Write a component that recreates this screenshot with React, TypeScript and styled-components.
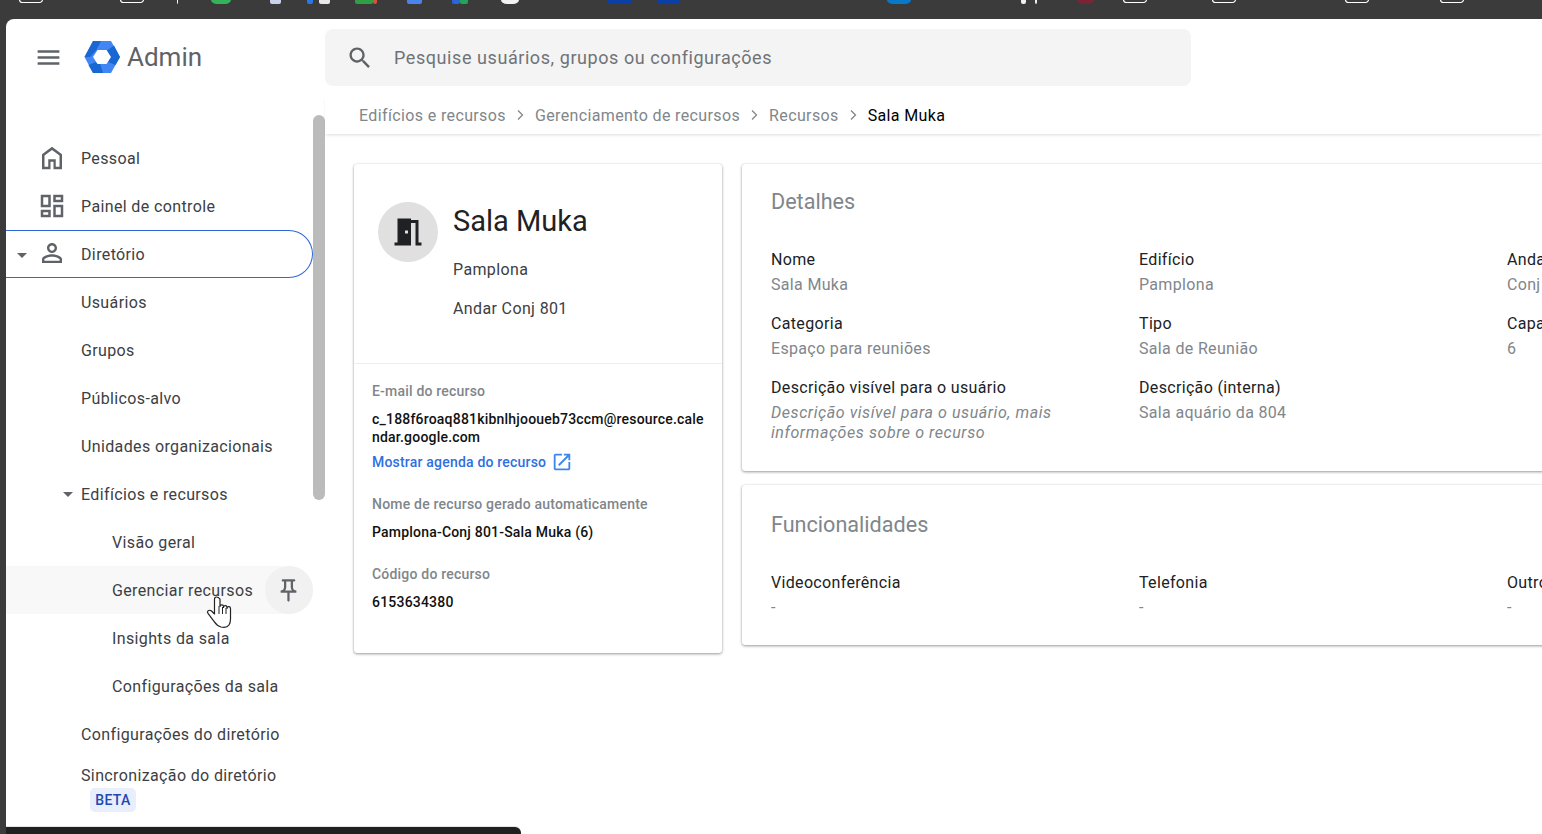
import React from 'react';
import styled, { createGlobalStyle } from 'styled-components';

const GlobalStyle = createGlobalStyle`
  html, body {
    margin: 0;
    padding: 0;
    height: 100%;
    overflow: hidden;
    background: #3b3b3b;
    font-family: Roboto, "Liberation Sans", sans-serif;
  }
  * { box-sizing: border-box; }
`;

const Desktop = styled.div`
  position: relative;
  width: 1542px;
  height: 834px;
  padding: 19px 0 0 6px;
  overflow: hidden;
`;

const TaskStrip = styled.svg`
  position: absolute;
  left: 0;
  top: 0;
`;

const BottomBar = styled.div`
  position: absolute;
  left: 6px;
  bottom: 0;
  width: 515px;
  height: 7px;
  background: #202020;
  border-top-right-radius: 6px;
  box-shadow: 0 -1px 0 #e4e4e4;
`;

const Window = styled.div`
  width: 1536px;
  height: 815px;
  background: #fff;
  border-top-left-radius: 8px;
  overflow: hidden;
  display: flex;
  flex-direction: column;
`;

const Header = styled.header`
  height: 77px;
  flex: none;
  display: flex;
  align-items: center;
  padding: 0 0 0 28px;
`;

const BrandBlock = styled.div`
  width: 291px;
  display: flex;
  align-items: center;
  margin-top: -1px;
`;

const MenuIcon = styled.svg`
  width: 29px;
  height: 29px;
  fill: #5f6368;
  flex: none;
`;

const Logo = styled.svg`
  width: 44px;
  height: 40px;
  margin-left: 17px;
  flex: none;
`;

const ProductName = styled.span`
  font-size: 26px;
  color: #5f6368;
  margin-left: 3px;
`;

const SearchBox = styled.div`
  width: 866px;
  height: 57px;
  background: #f4f4f4;
  border-radius: 8px;
  display: flex;
  align-items: center;
  padding-left: 21px;
  gap: 20px;
  font-size: 18px;
  letter-spacing: 0.57px;
  color: #6f7377;
`;

const SearchIcon = styled.svg`
  width: 28px;
  height: 28px;
  fill: #5f6368;
  flex: none;
`;

const Body = styled.div`
  flex: 1;
  min-height: 0;
  display: flex;
`;

const Sidebar = styled.nav`
  width: 307px;
  flex: none;
  padding-top: 38px;
  letter-spacing: 0.37px;
`;

const NavRow = styled.div<{ $indent: number; $outlined?: boolean; $hovered?: boolean }>`
  position: relative;
  height: 48px;
  display: flex;
  align-items: center;
  padding-left: ${p => p.$indent}px;
  font-size: 16px;
  color: #3c4043;
  border-radius: 0 24px 24px 0;
  ${p => p.$outlined && 'border: 1px solid #2f66d8; border-left: none;'}
  ${p => p.$hovered && 'background: #f8f8f8;'}
`;

const NavIcon = styled.svg<{ $top: number }>`
  position: absolute;
  left: 31px;
  top: ${p => p.$top}px;
  width: 30px;
  height: 30px;
  fill: #5f6368;
  fill-rule: evenodd;
`;

const Caret = styled.span<{ $left: number }>`
  position: absolute;
  left: ${p => p.$left}px;
  top: 22px;
  width: 0;
  height: 0;
  border-left: 5px solid transparent;
  border-right: 5px solid transparent;
  border-top: 5px solid #5f6368;
`;

const PinButton = styled.span`
  position: absolute;
  right: 0;
  top: 0;
  width: 48px;
  height: 48px;
  padding-right: 2px;
  border-radius: 50%;
  background: #f1f1f1;
  display: flex;
  align-items: center;
  justify-content: center;
`;

const PinIcon = styled.svg`
  width: 27px;
  height: 27px;
  fill: #5f6368;
`;

const SyncRow = styled.div`
  padding: 7px 0 0 75px;
  font-size: 16px;
  line-height: 22px;
  color: #3c4043;
`;

const BetaTag = styled.span`
  display: block;
  width: 46px;
  height: 24px;
  margin: 1px 0 0 9px;
  border-radius: 5px;
  background: #e8eefb;
  color: #2447b3;
  font-size: 14px;
  font-weight: 500;
  line-height: 24px;
  text-align: center;
  letter-spacing: 0.3px;
`;

const ScrollTrack = styled.div`
  width: 12px;
  flex: none;
  padding-top: 19px;
`;

const ScrollThumb = styled.div`
  width: 12px;
  height: 385px;
  border-radius: 6px;
  background: #bbb;
`;

const Content = styled.main`
  flex: 1;
  min-width: 0;
  display: flex;
  flex-direction: column;
`;

const Breadcrumbs = styled.div`
  height: 38px;
  flex: none;
  display: flex;
  align-items: center;
  padding: 0 0 0 34px;
  font-size: 16px;
  letter-spacing: 0.37px;
  color: #80868b;
  box-shadow: 0 2px 3px -1px rgba(0, 0, 0, 0.14);
`;

const Crumb = styled.span<{ $current?: boolean }>`
  color: ${p => (p.$current ? '#000' : '#80868b')};
`;

const CrumbArrow = styled.svg`
  width: 18px;
  height: 18px;
  margin: 0 6px 0 5px;
  fill: none;
  stroke: #80868b;
  stroke-width: 1.3;
`;

const CardArea = styled.div`
  flex: 1;
  display: flex;
  align-items: flex-start;
  gap: 20px;
  padding: 30px 0 0 29px;
  overflow: hidden;
`;

const Card = styled.section`
  background: #fff;
  border-radius: 3px;
  box-shadow: 0 1px 3px rgba(0, 0, 0, 0.4), 0 0 1px rgba(0, 0, 0, 0.12);
`;

const ProfileCard = styled(Card)`
  width: 368px;
  height: 489px;
  flex: none;
`;

const ProfileTop = styled.div`
  height: 200px;
  border-bottom: 1px solid #eee;
  display: flex;
  padding: 38px 0 0 24px;
  gap: 15px;
`;

const Avatar = styled.div`
  width: 60px;
  height: 60px;
  flex: none;
  border-radius: 50%;
  background: #e0e0e0;
  display: flex;
  align-items: center;
  justify-content: center;
`;

const DoorIcon = styled.svg`
  width: 36px;
  height: 36px;
  fill: #202124;
`;

const ProfileNames = styled.div`
  padding-top: 0;
`;

const ProfileName = styled.h1`
  margin: 0 0 10px;
  font-size: 29px;
  font-weight: 400;
  line-height: 38px;
  color: #202124;
`;

const ProfileLine = styled.p`
  margin: 0;
  font-size: 16px;
  line-height: 39px;
  letter-spacing: 0.37px;
  color: #3c4043;
`;

const ProfileBottom = styled.div`
  padding: 18px 17px 0 18px;
  letter-spacing: 0.2px;
`;

const InfoBlock = styled.div`
  margin-bottom: 24px;
`;

const InfoLabel = styled.div`
  font-size: 14px;
  font-weight: 500;
  line-height: 18px;
  color: #80868b;
  margin-bottom: 10px;
`;

const InfoValue = styled.div`
  font-size: 14px;
  font-weight: 500;
  line-height: 18px;
  color: #111;
  word-break: break-all;
`;

const ResourceLink = styled.a`
  display: flex;
  align-items: center;
  gap: 5px;
  height: 24px;
  margin: 4px 0 -3px;
  font-size: 14px;
  font-weight: 500;
  color: #2f6fe0;
`;

const LinkIcon = styled.svg`
  width: 22px;
  height: 22px;
  fill: #3f86ea;
`;

const DetailColumn = styled.div`
  display: flex;
  flex-direction: column;
  gap: 14px;
  flex: none;
  width: 1162px;
`;

const DetailCard = styled(Card)<{ $height: number }>`
  height: ${p => p.$height}px;
  padding: 0 29px;
`;

const CardTitle = styled.h2<{ $top: number }>`
  margin: 0;
  padding-top: ${p => p.$top}px;
  font-size: 21.6px;
  font-weight: 400;
  line-height: 30px;
  color: #80868b;
`;

const FieldGrid = styled.div<{ $top: number }>`
  display: grid;
  grid-template-columns: repeat(3, 368px);
  row-gap: 19px;
  margin-top: ${p => p.$top}px;
  letter-spacing: 0.33px;
`;

const Field = styled.div``;

const FieldLabel = styled.div`
  font-size: 16px;
  line-height: 20px;
  color: #202124;
  margin-bottom: 5px;
`;

const FieldValue = styled.div<{ $italic?: boolean }>`
  font-size: 16px;
  line-height: 20px;
  color: #80868b;
  max-width: 310px;
  ${p => p.$italic && 'font-style: italic; letter-spacing: 0.57px;'}
`;

const HandCursor = styled.svg`
  position: absolute;
  left: 205px;
  top: 594px;
  width: 30px;
  height: 36px;
`;

const slivers: { x: number; w: number; c: string; outline?: boolean; round?: boolean }[] = [
  { x: 19, w: 23, c: '#fff', outline: true },
  { x: 120, w: 23, c: '#fff', outline: true },
  { x: 177, w: 1, c: '#fff' },
  { x: 211, w: 20, c: '#34b35a', round: true },
  { x: 270, w: 11, c: '#c9d2ea' },
  { x: 307, w: 6, c: '#2a78e4' },
  { x: 319, w: 11, c: '#e8e8e8' },
  { x: 355, w: 18, c: '#2f9e44' },
  { x: 373, w: 4, c: '#d9503c' },
  { x: 407, w: 15, c: '#4a82ee' },
  { x: 452, w: 8, c: '#2a66d8' },
  { x: 460, w: 8, c: '#22a559' },
  { x: 501, w: 18, c: '#f2f2f2', round: true },
  { x: 608, w: 24, c: '#0a3ea8' },
  { x: 657, w: 23, c: '#0a3ea8' },
  { x: 887, w: 24, c: '#0a78c8', round: true },
  { x: 1021, w: 5, c: '#f0f0f0' },
  { x: 1035, w: 2, c: '#f0f0f0' },
  { x: 1077, w: 17, c: '#7a2436', round: true },
  { x: 1123, w: 23, c: '#fff', outline: true },
  { x: 1212, w: 23, c: '#fff', outline: true },
  { x: 1345, w: 23, c: '#fff', outline: true },
  { x: 1440, w: 23, c: '#fff', outline: true },
];

const Chevron = () => (
  <CrumbArrow viewBox="0 0 18 18">
    <path d="M7 4.5l4.5 4.5L7 13.5" />
  </CrumbArrow>
);

const homePath = 'M12 3L4 9v12h6.800v-6h2.400v6H20V9l-8-6zM12 5.500l6 4.500v9h-3v-6H9v6H6v-9l6-4.500z';
const dashPath = 'M19 5v2h-4V5h4M9 5v6H5V5h4m10 8v6h-4v-6h4M9 17v2H5v-2h4M21 3h-8v6h8V3zM11 3H3v10h8V3zm10 8h-8v10h8V11zm-10 4H3v6h8v-6z';
const personPath = 'M12 5.9c1.16 0 2.1.94 2.1 2.1s-.94 2.1-2.1 2.1S9.9 9.16 9.9 8s.94-2.1 2.1-2.1m0 9c2.97 0 6.1 1.46 6.1 2.1v1.1H5.9V17c0-.64 3.13-2.1 6.1-2.1M12 4C9.79 4 8 5.79 8 8s1.79 4 4 4 4-1.79 4-4-1.79-4-4-4zm0 9c-2.67 0-8 1.34-8 4v3h16v-3c0-2.66-5.33-4-8-4z';

const NavItem = ({ d, label }: { d: string; label: string }) => (
  <NavRow $indent={75}>
    <NavIcon $top={9} viewBox="0 0 24 24"><path d={d} /></NavIcon>
    {label}
  </NavRow>
);

export default function App() {
  return (
    <Desktop>
      <GlobalStyle />
      <TaskStrip width="1542" height="6" viewBox="0 0 1542 6">
        {slivers.map((s, i) =>
          s.outline ? (
            <rect key={i} x={s.x + 0.5} y={-6} width={s.w} height={8.5} rx={3} fill="none" stroke={s.c} strokeWidth={1.2} />
          ) : (
            <rect key={i} x={s.x} y={-4} width={s.w} height={8} rx={s.round ? 6 : 2} fill={s.c} />
          )
        )}
      </TaskStrip>
      <Window>
        <Header>
          <BrandBlock>
            <MenuIcon viewBox="0 0 24 24">
              <path d="M3 18h18v-2H3v2zm0-5h18v-2H3v2zm0-7v2h18V6H3z" />
            </MenuIcon>
            <Logo viewBox="0 0 44 40">
              <path d="M13 4h18l9 16-9 16H13L4.500 20z" fill="#4285f4" />
              <path d="M13 4h8l-5 9.500L10 20H4.500z" fill="#1967d2" />
              <path d="M40 20l-4.500 8-7.500-3 2-5-3-6.500 7-5z" fill="#1967d2" />
              <path d="M13 36l-4.500-8 7.500-3 4 1.500 3 9.500z" fill="#1967d2" />
              <path d="M17.500 13h9l4.500 7-4.500 7h-9L13 20z" fill="#fff" />
            </Logo>
            <ProductName>Admin</ProductName>
          </BrandBlock>
          <SearchBox>
            <SearchIcon viewBox="0 0 24 24">
              <path d="M15.5 14h-.79l-.28-.27C15.41 12.59 16 11.11 16 9.5 16 5.91 13.09 3 9.5 3S3 5.91 3 9.5 5.91 16 9.5 16c1.61 0 3.09-.59 4.23-1.57l.27.28v.79l5 4.99L20.49 19l-4.99-5zm-6 0C7.01 14 5 11.99 5 9.5S7.01 5 9.5 5 14 7.01 14 9.5 11.99 14 9.5 14z" />
            </SearchIcon>
            Pesquise usuários, grupos ou configurações
          </SearchBox>
        </Header>
        <Body>
          <Sidebar>
            <NavItem d={homePath} label="Pessoal" />
            <NavItem d={dashPath} label="Painel de controle" />
            <NavRow $indent={75} $outlined>
              <Caret $left={11} />
              <NavIcon $top={7} viewBox="0 0 24 24"><path d={personPath} /></NavIcon>
              Diretório
            </NavRow>
            <NavRow $indent={75}>Usuários</NavRow>
            <NavRow $indent={75}>Grupos</NavRow>
            <NavRow $indent={75}>Públicos-alvo</NavRow>
            <NavRow $indent={75}>Unidades organizacionais</NavRow>
            <NavRow $indent={75}>
              <Caret $left={57} />
              Edifícios e recursos
            </NavRow>
            <NavRow $indent={106}>Visão geral</NavRow>
            <NavRow $indent={106} $hovered>
              Gerenciar recursos
              <PinButton>
                <PinIcon viewBox="0 0 24 24">
                  <path d="M14 4v5c0 1.12.37 2.16 1 3H9c.65-.86 1-1.9 1-3V4h4m3-2H7c-.55 0-1 .45-1 1s.45 1 1 1h1v5c0 1.66-1.34 3-3 3v2h5.97v7l1 1 1-1v-7H19v-2c-1.66 0-3-1.34-3-3V4h1c.55 0 1-.45 1-1s-.45-1-1-1z" />
                </PinIcon>
              </PinButton>
            </NavRow>
            <NavRow $indent={106}>Insights da sala</NavRow>
            <NavRow $indent={106}>Configurações da sala</NavRow>
            <NavRow $indent={75}>Configurações do diretório</NavRow>
            <SyncRow>
              Sincronização do diretório
              <BetaTag>BETA</BetaTag>
            </SyncRow>
          </Sidebar>
          <ScrollTrack>
            <ScrollThumb />
          </ScrollTrack>
          <Content>
            <Breadcrumbs>
              <Crumb>Edifícios e recursos</Crumb>
              <Chevron />
              <Crumb>Gerenciamento de recursos</Crumb>
              <Chevron />
              <Crumb>Recursos</Crumb>
              <Chevron />
              <Crumb $current>Sala Muka</Crumb>
            </Breadcrumbs>
            <CardArea>
              <ProfileCard>
                <ProfileTop>
                  <Avatar>
                    <DoorIcon viewBox="0 0 24 24">
                      <path d="M14 6v15H3v-2h2V3h9v1h5v15h2v2h-4V6h-3zm-4 5v2h2v-2h-2z" />
                    </DoorIcon>
                  </Avatar>
                  <ProfileNames>
                    <ProfileName>Sala Muka</ProfileName>
                    <ProfileLine>Pamplona</ProfileLine>
                    <ProfileLine>Andar Conj 801</ProfileLine>
                  </ProfileNames>
                </ProfileTop>
                <ProfileBottom>
                  <InfoBlock>
                    <InfoLabel>E-mail do recurso</InfoLabel>
                    <InfoValue>c_188f6roaq881kibnlhjooueb73ccm@resource.calendar.google.com</InfoValue>
                    <ResourceLink>
                      Mostrar agenda do recurso
                      <LinkIcon viewBox="0 0 24 24">
                        <path d="M19 19H5V5h7V3H5c-1.11 0-2 .9-2 2v14c0 1.1.89 2 2 2h14c1.1 0 2-.9 2-2v-7h-2v7zM14 3v2h3.59l-9.83 9.83 1.41 1.41L19 6.41V10h2V3h-7z" />
                      </LinkIcon>
                    </ResourceLink>
                  </InfoBlock>
                  <InfoBlock>
                    <InfoLabel>Nome de recurso gerado automaticamente</InfoLabel>
                    <InfoValue>Pamplona-Conj 801-Sala Muka (6)</InfoValue>
                  </InfoBlock>
                  <InfoBlock>
                    <InfoLabel>Código do recurso</InfoLabel>
                    <InfoValue>6153634380</InfoValue>
                  </InfoBlock>
                </ProfileBottom>
              </ProfileCard>
              <DetailColumn>
                <DetailCard $height={307}>
                  <CardTitle $top={23}>Detalhes</CardTitle>
                  <FieldGrid $top={33}>
                    <Field><FieldLabel>Nome</FieldLabel><FieldValue>Sala Muka</FieldValue></Field>
                    <Field><FieldLabel>Edifício</FieldLabel><FieldValue>Pamplona</FieldValue></Field>
                    <Field><FieldLabel>Andar</FieldLabel><FieldValue>Conj 801</FieldValue></Field>
                    <Field><FieldLabel>Categoria</FieldLabel><FieldValue>Espaço para reuniões</FieldValue></Field>
                    <Field><FieldLabel>Tipo</FieldLabel><FieldValue>Sala de Reunião</FieldValue></Field>
                    <Field><FieldLabel>Capacidade</FieldLabel><FieldValue>6</FieldValue></Field>
                    <Field>
                      <FieldLabel>Descrição visível para o usuário</FieldLabel>
                      <FieldValue $italic>Descrição visível para o usuário, mais informações sobre o recurso</FieldValue>
                    </Field>
                    <Field><FieldLabel>Descrição (interna)</FieldLabel><FieldValue>Sala aquário da 804</FieldValue></Field>
                  </FieldGrid>
                </DetailCard>
                <DetailCard $height={160}>
                  <CardTitle $top={25}>Funcionalidades</CardTitle>
                  <FieldGrid $top={33}>
                    <Field><FieldLabel>Videoconferência</FieldLabel><FieldValue>-</FieldValue></Field>
                    <Field><FieldLabel>Telefonia</FieldLabel><FieldValue>-</FieldValue></Field>
                    <Field><FieldLabel>Outros</FieldLabel><FieldValue>-</FieldValue></Field>
                  </FieldGrid>
                </DetailCard>
              </DetailColumn>
            </CardArea>
          </Content>
        </Body>
      </Window>
      <HandCursor viewBox="0 0 30 36">
        <path
          d="M11.5 3c-1.2 0-2 .9-2 2.2V20l-3-3c-1-1-2.6-1-3.5-.1-.7.7-.6 1.7 0 2.5l6 8c1.5 2.2 3 4.6 7 5.6 3 .6 6.5.2 8-2 1-1.5 1.5-3.5 1.500-6V14.5c0-1-.8-1.800-1.800-1.800s-1.700.8-1.700 1.800v-1c0-1-.8-1.800-1.800-1.800s-1.700.8-1.700 1.800v-1c0-1-.8-1.700-1.700-1.700s-1.800.7-1.800 1.700V5.200C14 3.900 13.200 3 11.500 3z"
          fill="#fff"
          stroke="#222"
          strokeWidth="1.2"
          strokeLinejoin="round"
        />
        <path d="M14 12v8M17.500 13v7M21 14v6" stroke="#222" strokeWidth="1" fill="none" />
      </HandCursor>
      <BottomBar />
    </Desktop>
  );
}
